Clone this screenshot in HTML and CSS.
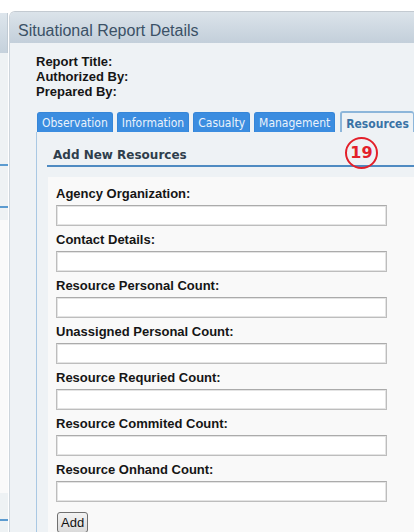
FILE: index.html
```html
<!DOCTYPE html>
<html lang="en">
<head>
<meta charset="utf-8">
<title>Situational Report Details</title>
<link rel="stylesheet" href="styles.css">
</head>
<body>
<div class="page">
  <aside class="side">
    <div class="side-head"></div>
    <div class="side-rule first"></div>
    <div class="side-rule second"></div>
    <div class="side-box"></div>
    <div class="side-rule third"></div>
  </aside>

  <main class="panel">
    <div class="panel-head">Situational Report Details</div>
    <div class="panel-body">
      <div class="meta">
        <div>Report Title:</div>
        <div>Authorized By:</div>
        <div>Prepared By:</div>
      </div>

      <ul class="tabs">
        <li class="tab">Observation</li>
        <li class="tab">Information</li>
        <li class="tab">Casualty</li>
        <li class="tab">Management</li>
        <li class="tab active">Resources</li>
      </ul>

      <section class="tab-body">
        <h2 class="section-title">Add New Resources</h2>
        <form class="form-box">
          <label class="field-label">Agency Organization:</label>
          <input class="field" type="text">
          <label class="field-label">Contact Details:</label>
          <input class="field" type="text">
          <label class="field-label">Resource Personal Count:</label>
          <input class="field" type="text">
          <label class="field-label">Unassigned Personal Count:</label>
          <input class="field" type="text">
          <label class="field-label">Resource Requried Count:</label>
          <input class="field" type="text">
          <label class="field-label">Resource Commited Count:</label>
          <input class="field" type="text">
          <label class="field-label">Resource Onhand Count:</label>
          <input class="field" type="text">
          <button class="add-btn" type="button">Add</button>
        </form>
      </section>
    </div>
    <span class="step-badge">19</span>
  </main>
</div>
</body>
</html>
```

FILE: styles.css
```css
html, body {
  margin: 0;
  padding: 0;
}

body {
  background: #ffffff;
  font-family: "Liberation Sans", Arial, sans-serif;
  color: #151515;
  width: 414px;
  height: 532px;
  overflow: hidden;
}

.page {
  display: flex;
  align-items: flex-start;
  padding-top: 11px;
  height: 521px;
}

/* narrow neighbouring pane on the left */
.side {
  flex: none;
  width: 8px;
  margin-top: 2px;
  height: 519px;
  background: #eef2f4;
  display: flex;
  flex-direction: column;
}

.side-head {
  height: 40px;
  background: linear-gradient(#dde5ec, #c5d1dc);
  border-right: 1px solid #c0cad3;
  box-sizing: border-box;
}

.side-rule {
  height: 2px;
  background: #5b9bd0;
}

.side-rule.first { margin-top: 111px; }
.side-rule.second { margin-top: 40px; }
.side-rule.third { margin-top: 26px; }

.side-box {
  margin-top: 12px;
  height: 273px;
  background: #fafafa;
}

/* main details panel */
.panel {
  position: relative;
  flex: 1;
  margin-left: 1px;
  height: 521px;
  box-sizing: border-box;
  border-top: 1px solid #c3cad1;
  border-left: 1px solid #cdd5dc;
  border-top-left-radius: 6px;
  background: #eef2f5;
  overflow: hidden;
}

.panel-head {
  height: 31px;
  box-sizing: border-box;
  padding: 6px 0 0 8px;
  line-height: 25px;
  font-size: 16px;
  color: #3b5166;
  background: linear-gradient(#dbe3ea, #c3cfda);
  white-space: nowrap;
}

.panel-body {
  padding: 11px 0 0 26px;
}

.meta {
  font-size: 13px;
  font-weight: bold;
  line-height: 15px;
  color: #151515;
}

/* tab strip */
.tabs {
  list-style: none;
  margin: 12px 0 0 1px;
  padding: 0;
  display: flex;
  align-items: flex-end;
  gap: 4px;
  white-space: nowrap;
}

.tab {
  height: 20px;
  box-sizing: border-box;
  padding: 1px 4px 0;
  line-height: 18px;
  font-family: "DejaVu Sans Condensed", "DejaVu Sans", Verdana, sans-serif;
  font-stretch: condensed;
  font-size: 12px;
  color: #eaf2fb;
  background: #3b8de0;
  border: 1px solid #3586d8;
  border-bottom: none;
  border-radius: 3px 3px 0 0;
}

.tab.active {
  height: 21px;
  padding-top: 2px;
  margin-left: 1px;
  font-weight: bold;
  color: #3a73a6;
  background: #eef2f5;
  border-color: #8db6da;
  border-width: 2px 1px 0 2px;
}

.tab-body {
  border-left: 1px solid #a9c8e3;
  padding-top: 16px;
  height: 400px;
}

.section-title {
  margin: 0 0 0 10px;
  padding: 0 0 2px 6px;
  font-family: "DejaVu Sans", Verdana, sans-serif;
  font-size: 12px;
  font-weight: bold;
  line-height: 15px;
  color: #2f3e4c;
  border-bottom: 2px solid #4f8bc2;
}

.form-box {
  margin: 10px 0 0 11px;
  padding: 9px 0 0 8px;
  background: #f9f9f9;
  height: 400px;
  display: flex;
  flex-direction: column;
  align-items: flex-start;
}

.field-label {
  display: block;
  font-size: 13px;
  font-weight: bold;
  line-height: 15px;
  color: #151515;
  margin-top: 6px;
  margin-bottom: 4px;
  white-space: nowrap;
}

.field-label:first-child {
  margin-top: 0;
}

.field {
  display: block;
  width: 331px;
  height: 21px;
  box-sizing: border-box;
  margin: 0;
  padding: 0 3px;
  border: 1px solid #bdbdbd;
  border-top-color: #ababab;
  box-shadow: inset 0 0 0 1px #e4e4e4;
  background: #ffffff;
  font: 13px "Liberation Sans", Arial, sans-serif;
}

.add-btn {
  margin-top: 10px;
  margin-left: 1px;
  height: 21px;
  padding: 0 3px;
  border: 1px solid #707070;
  border-radius: 3px;
  background: linear-gradient(#f3f3f3, #dadada);
  font: 13px "Liberation Sans", Arial, sans-serif;
  color: #111111;
  line-height: 19px;
}

/* numbered step marker */
.step-badge {
  position: absolute;
  left: 335px;
  top: 125px;
  width: 33px;
  height: 32px;
  box-sizing: border-box;
  border: 2px solid #e3202a;
  border-radius: 50%;
  color: #e3202a;
  font-family: "DejaVu Sans", Verdana, sans-serif;
  font-size: 16px;
  font-weight: bold;
  line-height: 28px;
  text-align: center;
}
```
